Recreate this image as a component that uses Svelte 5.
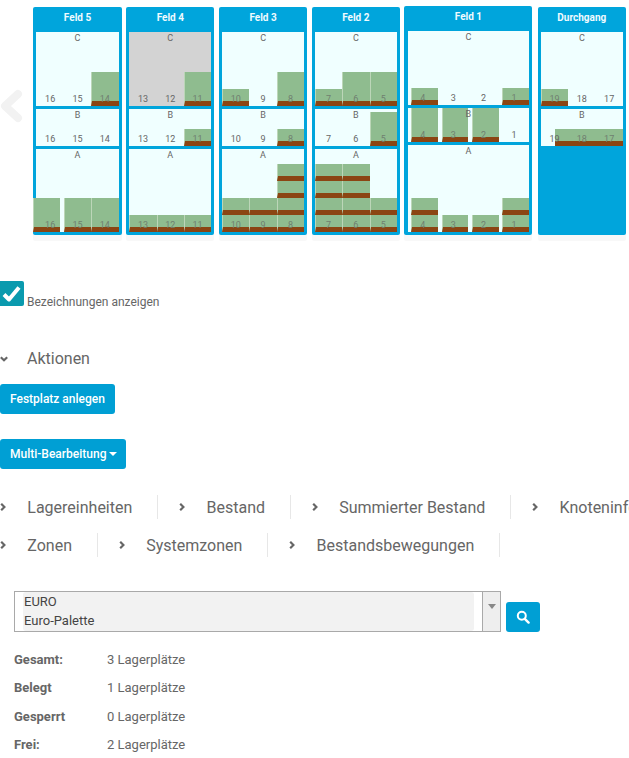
<script>
  const racks = [
    { name: 'Feld 5', nums: [16, 15, 14], levels: [
      { name: 'C', h: 74, stacks: [[], [], [34]] },
      { name: 'B', h: 37, stacks: [[], [], []] },
      { name: 'A', h: 83, stacks: [[34], [34], [34]], shifted: true }
    ] },
    { name: 'Feld 4', nums: [13, 12, 11], levels: [
      { name: 'C', h: 74, stacks: [[], [], [34]], blocked: true },
      { name: 'B', h: 37, stacks: [[], [], [17]] },
      { name: 'A', h: 83, stacks: [[17], [17], [17]] }
    ] },
    { name: 'Feld 3', nums: [10, 9, 8], levels: [
      { name: 'C', h: 74, stacks: [[17], [], [34]] },
      { name: 'B', h: 37, stacks: [[], [], [17]] },
      { name: 'A', h: 83, stacks: [[17, 17], [17, 17], [17, 17, 17, 17]] }
    ] },
    { name: 'Feld 2', nums: [7, 6, 5], levels: [
      { name: 'C', h: 74, stacks: [[17], [34], [34]] },
      { name: 'B', h: 37, stacks: [[], [], [34]] },
      { name: 'A', h: 83, stacks: [[17, 17, 17, 17], [17, 17, 17, 17], [17, 17]] }
    ] },
    { name: 'Feld 1', nums: [4, 3, 2, 1], wide: true, levels: [
      { name: 'C', h: 74, stacks: [[17], [], [], [17]] },
      { name: 'B', h: 34, stacks: [[34], [34], [34], []] },
      { name: 'A', h: 87, stacks: [[17, 17], [17], [17], [17, 17]] }
    ] },
    { name: 'Durchgang', nums: [19, 18, 17], levels: [
      { name: 'C', h: 74, stacks: [[17], [], []] },
      { name: 'B', h: 37, stacks: [[], [], []], long: true }
    ] }
  ];

  const tabRows = [
    ['Lagereinheiten', 'Bestand', 'Summierter Bestand', 'Knoteninfo'],
    ['Zonen', 'Systemzonen', 'Bestandsbewegungen']
  ];

  const stats = [
    ['Gesamt:', '3 Lagerplätze'],
    ['Belegt', '1 Lagerplätze'],
    ['Gesperrt', '0 Lagerplätze'],
    ['Frei:', '2 Lagerplätze']
  ];
</script>

<div class="page">
  <div class="carousel">
    <svg class="prev" width="24" height="36" viewBox="0 0 24 36">
      <path d="M18 6 L5 18 L18 30" fill="none" stroke="#f2f2f2" stroke-width="8" stroke-linecap="round" stroke-linejoin="round" />
    </svg>
    <div class="racks">
      {#each racks as rack}
        <div class="rack" class:wide={rack.wide}>
          <div class="rack-title">{rack.name}</div>
          <div class="levels">
            {#each rack.levels as level}
              <div class="level" class:blocked={level.blocked} style="height: {level.h}px">
                <span class="letter">{level.name}</span>
                {#if level.long}
                  <div class="pallet long" style="height: 17px"></div>
                {/if}
                {#each level.stacks as stack, i}
                  <div class="slot" class:filled={stack.length > 0 || (level.long && i > 0)}>
                    <div class="stack" class:shifted={level.shifted && i === 0}>
                      {#each stack as height}
                        <div class="pallet" style="height: {height}px"></div>
                      {/each}
                    </div>
                    <span class="num">{rack.nums[i]}</span>
                  </div>
                {/each}
              </div>
            {/each}
          </div>
        </div>
      {/each}
    </div>
  </div>

  <label class="show-labels">
    <span class="check">
      <svg width="20" height="18" viewBox="0 0 20 18">
        <path d="M2 9.5 L7 14.5 L17 2.5" fill="none" stroke="#fff" stroke-width="4" stroke-linejoin="round" />
      </svg>
    </span>
    <span class="label-text">Bezeichnungen anzeigen</span>
  </label>

  <div class="actions-head">
    <svg width="8" height="6" viewBox="0 0 8 6">
      <path d="M0.8 1.2 L4 4.2 L7.2 1.2" fill="none" stroke="#666" stroke-width="2.2" />
    </svg>
    <span>Aktionen</span>
  </div>
  <button class="btn first">Festplatz anlegen</button>
  <button class="btn second">Multi-Bearbeitung<i class="caret"></i></button>

  <div class="tabs">
    {#each tabRows as row}
      <div class="tab-row">
        {#each row as tab}
          <div class="tab">
            <svg width="6" height="8" viewBox="0 0 6 8">
              <path d="M1.2 0.8 L4.4 4 L1.2 7.2" fill="none" stroke="#666" stroke-width="2.2" />
            </svg>
            <span>{tab}</span>
          </div>
        {/each}
      </div>
    {/each}
  </div>

  <div class="search">
    <div class="select">
      <div class="selected">
        <div>EURO</div>
        <div>Euro-Palette</div>
      </div>
      <div class="arrow"><i></i></div>
    </div>
    <button class="search-btn" aria-label="Suchen">
      <svg width="14" height="14" viewBox="0 0 14 14">
        <circle cx="5.8" cy="5.8" r="4" fill="none" stroke="#fff" stroke-width="2" />
        <path d="M8.8 8.8 L12.6 12.6" stroke="#fff" stroke-width="2.4" stroke-linecap="round" />
      </svg>
    </button>
  </div>

  <div class="stats">
    {#each stats as [label, value]}
      <div class="stat">
        <b>{label}</b>
        <span>{value}</span>
      </div>
    {/each}
  </div>
</div>

<style>
  :global(body) {
    margin: 0;
    background: #fff;
    font-family: Roboto, "Liberation Sans", sans-serif;
    color: #666;
  }

  .page {
    width: 629px;
    height: 758px;
    overflow: hidden;
  }

  .carousel {
    position: relative;
    height: 241px;
  }

  .prev {
    position: absolute;
    left: 0;
    top: 88px;
  }

  .racks {
    display: flex;
    align-items: flex-start;
    gap: 4.4px;
    padding: 7px 0 0 33.3px;
  }

  .rack {
    width: 88.4px;
    height: 228px;
    box-sizing: border-box;
    padding: 0 3.2px;
    background: #00a5dc;
    border-radius: 2px;
    box-shadow: 0 6px 0 #f8f8f8;
  }

  .rack.wide {
    width: 128px;
    height: 229px;
    margin: -1px 0.8px 0 0;
  }

  .rack-title {
    height: 25px;
    line-height: 21px;
    text-align: center;
    font-size: 10px;
    font-weight: 700;
    color: #f0fbff;
  }

  .levels {
    display: flex;
    flex-direction: column;
    gap: 3px;
  }

  .level {
    position: relative;
    display: flex;
    background: #f0ffff;
  }

  .level.blocked {
    background: #d3d3d3;
  }

  .letter {
    position: absolute;
    z-index: 1;
    top: 1px;
    left: 0;
    right: 0;
    text-align: center;
    font-size: 9px;
    line-height: 10px;
    color: #666;
  }

  .slot {
    position: relative;
    flex: 1 1 0;
    display: flex;
    flex-direction: column;
    justify-content: flex-end;
  }

  .wide .slot {
    padding-left: 3.5px;
  }

  .stack.shifted {
    margin: 0 3.4px 0 -3.4px;
  }

  .pallet {
    box-sizing: border-box;
    background: #8fbc8f;
    border-bottom: 5px solid #8b4513;
    border-left: 1px solid #bcd6b8;
  }

  .pallet.long {
    position: absolute;
    z-index: 0;
    left: 14.2px;
    right: 0;
    bottom: 0;
    border-left: 0;
  }

  .num {
    position: absolute;
    z-index: 1;
    left: 0;
    right: 0;
    bottom: 2px;
    text-align: center;
    font-size: 9px;
    line-height: 10px;
    color: #666;
  }

  .filled .num {
    color: #6f7f6f;
  }

  .show-labels {
    display: flex;
    align-items: flex-end;
    gap: 3px;
    margin-top: 40px;
    font-size: 12px;
    line-height: 14px;
  }

  .label-text {
    margin-bottom: -3px;
  }

  .check {
    display: flex;
    align-items: center;
    justify-content: center;
    width: 24px;
    height: 25px;
    background: #0a9aae;
    border-radius: 0 2px 2px 0;
  }

  .actions-head {
    display: flex;
    align-items: center;
    gap: 19px;
    margin-top: 42px;
    font-size: 16px;
    line-height: 22px;
  }

  .btn {
    display: block;
    height: 30px;
    padding: 0 9px 0 10px;
    border: 0;
    border-radius: 3px;
    background: #009fd4;
    color: #fff;
    font-family: inherit;
    font-size: 12px;
    font-weight: 500;
  }

  .btn.first {
    margin-top: 14px;
    padding-right: 10px;
  }

  .btn.second {
    margin-top: 25px;
  }

  .caret {
    display: inline-block;
    margin-left: 3px;
    vertical-align: 2px;
    border: 4px solid transparent;
    border-top-color: #fff;
    border-bottom: 0;
  }

  .tabs {
    margin-top: 26px;
    white-space: nowrap;
  }

  .tab-row {
    display: flex;
    height: 24px;
    margin-bottom: 14px;
  }

  .tab {
    display: flex;
    flex: none;
    align-items: center;
    gap: 21.3px;
    padding: 0 25px 0 20.9px;
    border-right: 1px solid #e7e7e7;
    font-size: 16px;
    color: #666;
  }

  .tab:first-child {
    padding-left: 0;
  }

  .search {
    display: flex;
    align-items: flex-end;
    gap: 5px;
    margin: 34px 0 0 14px;
  }

  .select {
    display: flex;
    box-sizing: border-box;
    width: 487px;
    height: 41px;
    border: 1px solid #a9a9a9;
    background: #fff;
  }

  .selected {
    width: 451px;
    margin-left: 8px;
    padding-left: 1px;
    box-sizing: border-box;
    background: #f2f2f2;
    border-radius: 3px;
    font-size: 13px;
    line-height: 19px;
    color: #444;
  }

  .arrow {
    width: 18px;
    margin-left: auto;
    display: flex;
    justify-content: center;
    padding-top: 12px;
    box-sizing: border-box;
    border-left: 1px solid #a9a9a9;
    background: #eee;
  }

  .arrow i {
    width: 0;
    height: 0;
    border: 4px solid transparent;
    border-top: 5px solid #888;
    border-bottom: 0;
  }

  .search-btn {
    display: flex;
    align-items: center;
    justify-content: center;
    width: 34px;
    height: 30px;
    padding: 0;
    border: 0;
    border-radius: 3px;
    background: #009fd4;
  }

  .stats {
    margin: 13px 0 0 14px;
    font-size: 13px;
  }

  .stat {
    display: flex;
    height: 28.5px;
    align-items: center;
  }

  .stat b {
    width: 93px;
    font-weight: 700;
  }
</style>
